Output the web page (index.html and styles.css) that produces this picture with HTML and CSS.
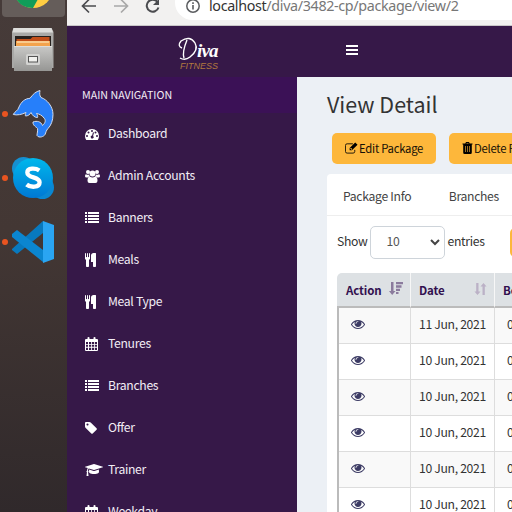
FILE: index.html
```html
<!DOCTYPE html>
<html lang="en">
<head>
<meta charset="utf-8">
<title>View Detail</title>
<link rel="stylesheet" href="styles.css">
</head>
<body>
<svg class="defs" width="0" height="0">
  <symbol id="eye" viewBox="0 0 1792 1792"><path d="M1664 960q-152-236-381-353 61 104 61 225 0 185-131.5 316.5t-316.5 131.5-316.5-131.5-131.5-316.5q0-121 61-225-229 117-381 353 133 205 333.500 326.500t434.500 121.500 434.500-121.500 333.500-326.500zm-720-384q0-20-14-34t-34-14q-125 0-214.500 89.500t-89.500 214.500q0 20 14 34t34 14 34-14 14-34q0-86 61-147t147-61q20 0 34-14t14-34zm848 384q0 34-20 69-140 230-376.500 368.500t-499.500 138.500-499.500-139-376.500-368q-20-35-20-69t20-69q140-229 376.500-368t499.500-139 499.500 139 376.500 368q20 35 20 69z"/></symbol>
  <symbol id="cutlery" viewBox="192 0 1792 1792"><path d="M832 64v640q0 61-35.500 111t-92.500 70v779q0 52-38 90t-90 38h-128q-52 0-90-38t-38-90v-779q-57-20-92.500-70t-35.500-111v-640q0-26 19-45t45-19 45 19 19 45v416q0 26 19 45t45 19 45-19 19-45v-416q0-26 19-45t45-19 45 19 19 45v416q0 26 19 45t45 19 45-19 19-45v-416q0-26 19-45t45-19 45 19 19 45zm768 0v1600q0 52-38 90t-90 38h-128q-52 0-90-38t-38-90v-512h-224q-13 0-22.500-9.500t-9.500-22.500v-800q0-132 94-226t226-94h256q26 0 45 19t19 45z"/></symbol>
  <symbol id="tag" viewBox="128 0 1792 1792"><path d="M576 448q0-53-37.500-90.500t-90.500-37.500-90.500 37.500-37.500 90.500 37.500 90.500 90.500 37.500 90.500-37.500 37.500-90.500zm1067 576q0 53-37 90l-491 492q-39 37-91 37-53 0-90-37l-715-716q-38-37-64.500-101t-26.500-117v-416q0-52 38-90t90-38h416q53 0 117 26.500t102 64.500l715 714q37 39 37 91z"/></symbol>
  <symbol id="cap" viewBox="0 0 2304 1792"><path d="M1774 836l18 316q4 69-82 128t-235 93.500-323 34.500-323-34.500-235-93.500-82-128l18-316 574 181q22 7 48 7t48-7zm530-324q0 23-22 31l-1120 352q-4 1-10 1t-10-1l-652-206q-43 34-71 111.500t-34 178.500q63 36 63 109 0 69-58 107l58 433q2 14-8 25-9 11-24 11h-192q-15 0-24-11-10-11-8-25l58-433q-58-38-58-107 0-73 65-111 11-207 98-330l-333-104q-22-8-22-31t22-31l1120-352q4-1 10-1t10 1l1120 352q22 8 22 31z"/></symbol>
  <symbol id="list" viewBox="0 0 14 14"><path d="M0 1h2v2H0zM3 1h11v2H3zM0 4h2v2H0zM3 4h11v2H3zM0 7h2v2H0zM3 7h11v2H3zM0 10h2v2H0zM3 10h11v2H3z"/></symbol>
  <symbol id="calendar" viewBox="0 0 14 14"><path fill-rule="evenodd" d="M1 2h1.500V.8Q2.500 0 3.500 0t1 .8V2h4V.8Q8.500 0 9.500 0t1 .8V2H12q1 0 1 1v10q0 1-1 1H1q-1 0-1-1V3q0-1 1-1zM1 5v2h2V5zM4 5v2h2.200V5zM7 5v2h2.200V5zM10 5v2h2V5zM1 7.800v2h2v-2zM4 7.800v2h2.200v-2zM7 7.800v2h2.200v-2zM10 7.800v2h2v-2zM1 10.700V13h2v-2.300zM4 10.700V13h2.200v-2.300zM7 10.700V13h2.200v-2.300zM10 10.700V13h2v-2.300z"/></symbol>
  <symbol id="gauge" viewBox="0 0 14 14"><path fill-rule="evenodd" d="M7 2a7 7 0 0 1 7 7q0 2-1.100 3.800-.2.200-.5.200H1.600q-.3 0-.5-.2Q0 11 0 9a7 7 0 0 1 7-7zM2 8a1 1 0 1 0 0 2 1 1 0 0 0 0-2zM3.500 4.500a1 1 0 1 0 0 2 1 1 0 0 0 0-2zM7 3a1 1 0 1 0 0 2 1 1 0 0 0 0-2zM10.500 4.500a1 1 0 1 0 0 2 1 1 0 0 0 0-2zM12 8a1 1 0 1 0 0 2 1 1 0 0 0 0-2zM7.900 5.600 7.100 8.600a1.500 1.500 0 1 0 1 .3l.8-3q0-.5-.4-.6t-.6.300z"/></symbol>
  <symbol id="users" viewBox="0 0 15 14"><circle cx="3" cy="3" r="2"/><circle cx="12" cy="3" r="2"/><circle cx="7.500" cy="4.500" r="3"/><path d="M1 5.300q2 1 3 .2.100 1.200 1 2.100-1.500 0-2.200 1H1.500Q0 8.600 0 7.300q0-2 1-2zM14 5.300q-2 1-3 .2-.1 1.200-1 2.100 1.500 0 2.200 1h1.300q1.500 0 1.500-1.300 0-2-1-2zM4.800 7.600q2.700 2 5.400 0 2.300.3 2.300 4.200 0 2.200-2 2.200h-6q-2 0-2-2.200 0-3.900 2.300-4.200z"/></symbol>
  <symbol id="edit" viewBox="0 0 14 14"><path d="M8.500 2.500H2.300Q.5 2.500.5 4.200v6.600q0 1.700 1.800 1.700h6.400q1.800 0 1.800-1.700V9" fill="none" stroke="currentColor"/><path fill-rule="evenodd" d="m11 1 2.500 2.500-6 6H5V7zM5.800 7.300v.7h.8v.8h.6l.6-.7-1.400-1.400z"/></symbol>
  <symbol id="trash" viewBox="0 0 11 14"><path fill-rule="evenodd" d="M3.300 2.500 4 1h3l.7 1.500H10.500v1H9.800v8q0 1.500-1.300 1.500h-6Q1.200 13 1.200 11.500v-8H.5v-1zM4.400 2.500h2.200L6.400 2H4.600zM3 5v6h.6V5zM5.200 5v6h.6V5zM7.400 5v6H8V5z"/></symbol>
</svg>
<div class="screen">
  <aside class="dock">
    <div class="app chrome"><svg width="48" height="48" viewBox="0 0 48 48"><circle cx="24" cy="24" r="20" fill="#ffcd42"/><path d="M6.500 14A20 20 0 0 0 24 44l9-16-9-4z" fill="#109d59"/><path d="M6.500 14a20 20 0 0 1 35 0H24z" fill="#dd4b3e"/><circle cx="24" cy="24" r="9" fill="#fff"/><circle cx="24" cy="24" r="7" fill="#4285f4"/></svg></div>
    <div class="app"><svg width="48" height="48" viewBox="0 0 48 48">
      <defs><linearGradient id="metal" x2="0" y2="1"><stop stop-color="#c9c9c7"/><stop offset="1" stop-color="#969694"/></linearGradient></defs>
      <path d="M4.500 2h38l2 4v36H3V6z" fill="#a9a9a7"/><path d="M4.500 2h38l1.500 4.500H3.500z" fill="#dededc"/><path d="M6 10h36v13H6z" fill="#26211e"/><path d="M7.500 13h14l2-2h17v11h-33z" fill="#c34f19"/><path d="M7 15h34v5H7z" fill="#f3a34d"/><path d="M8 16h32" stroke="#fff3cf"/><path d="M5 20h38v25H5z" fill="url(#metal)"/><path d="M5 20.500h38" stroke="#deddda"/><rect x="17" y="28" width="14" height="11" rx="1.500" fill="#d3d3d1"/><rect x="19.500" y="30.500" width="9" height="5.500" fill="#f1f1ee" stroke="#555"/>
    </svg></div>
    <div class="app running"><svg width="48" height="48" viewBox="0 0 48 48"><path d="M4.300 24.500C5 22 9 21 10 17c2-5 6-8.500 11-8.700C24 4 27 1.500 31 .5c-.5 3-.5 5 1 7 6 2 12 9 12 17 0 6-2 11-5 14-2 2-2 4-3 6-1 2-6 4-8 1 0-2 1-5 .5-7-1-1.500-5-3-4.500-6.500 4-1.500 8-.5 9.500 3.500C36.500 33 37 30 35 28c-2-3-5-4-7.500-4.500 1 1.500 1.500 3 1 4-3 0-5-2-6.500-5-1 2-3 3.500-5.500 3.500-.5-1 0-2 .5-3.500C13 24.500 8 25.500 4.300 24.500z" fill="#267ffa" stroke="#d3dbed" stroke-width="1"/></svg></div>
    <div class="app running"><svg width="48" height="48" viewBox="0 0 48 48">
      <defs><linearGradient id="sky" x2="0" y2="1"><stop stop-color="#00b8ec"/><stop offset="1" stop-color="#0078d4"/></linearGradient></defs>
      <circle cx="14.500" cy="14.500" r="11.500" fill="#168fd0"/><circle cx="33.500" cy="33.500" r="11.500" fill="#0a87d2"/><circle cx="24" cy="24" r="20" fill="url(#sky)"/><path d="M30.300 16.500c-3.500-2.500-12-3-12 2 0 6 12.300 3.800 12.300 9.800 0 5.800-9.500 5.200-13 2.200" fill="none" stroke="#fff" stroke-width="4.300"/></svg></div>
    <div class="app running"><svg width="48" height="48" viewBox="0 0 48 48"><path d="M3 31 34 3v12L8 36l-5-4z" fill="#0879be"/><path d="m3 16 5-4 26 20v12L3 19z" fill="#0b86d0"/><path d="m34 3 11 4v34l-11 4z" fill="#2aa5f2"/></svg></div>
  </aside>
  <div class="browser">
    <div class="toolbar">
      <div class="controls"><svg width="96" height="20" viewBox="0 0 96 20" fill="none" stroke-width="1.700"><path d="M29 6H16m6-6.500L15.500 6l6.500 6.500" stroke="#4b4c4f"/><path d="M47 6h13m-6-6.500L60.500 6 54 12.500" stroke="#a8a8a8"/><path d="M91.500 7.500A6 6 0 1 1 90.500 2" stroke="#4b4c4f" stroke-width="2"/><path d="M92-1v6h-6z" fill="#4b4c4f"/></svg></div>
      <div class="address"><svg width="16" height="16" viewBox="0 0 16 16"><circle cx="8" cy="8" r="6.200" fill="none" stroke="#5b5d60" stroke-width="1.500"/><path d="M8 7v4.500M8 4.300V6" stroke="#5b5d60" stroke-width="1.600"/></svg><span class="url"><b>localhost</b>/diva/3482-cp/package/view/2</span></div>
    </div>
    <header class="top">
      <div class="logo"><svg class="swash" width="24" height="26" viewBox="0 0 24 26"><path d="M9 4Q4 16 6 22M2 22q5 3 10-1 9-7 5-14Q12-1 3 5q-4 5 1 7" fill="none" stroke="#fff" stroke-width="1.400"/></svg><span class="name">iva</span><span class="sub">FITNESS</span></div>
      <div class="burger"><i></i><i></i><i></i></div>
    </header>
    <div class="body">
      <nav class="side">
        <div class="nav-title">MAIN NAVIGATION</div>
        <a><svg><use href="#gauge"/></svg>Dashboard</a>
        <a><svg class="w15"><use href="#users"/></svg>Admin Accounts</a>
        <a><svg><use href="#list"/></svg>Banners</a>
        <a><svg><use href="#cutlery"/></svg>Meals</a>
        <a><svg><use href="#cutlery"/></svg>Meal Type</a>
        <a><svg><use href="#calendar"/></svg>Tenures</a>
        <a><svg><use href="#list"/></svg>Branches</a>
        <a><svg><use href="#tag"/></svg>Offer</a>
        <a><svg class="w18"><use href="#cap"/></svg>Trainer</a>
        <a><svg><use href="#calendar"/></svg>Weekday</a>
      </nav>
      <main>
        <h1>View Detail</h1>
        <div class="actions">
          <button class="edit"><svg width="13" height="14"><use href="#edit"/></svg><span>Edit Package</span></button>
          <button class="delete"><svg width="11" height="14"><use href="#trash"/></svg><span>Delete Package</span></button>
        </div>
        <section class="card">
          <div class="tabs"><span>Package Info</span><span>Branches</span></div>
          <div class="filter"><span>Show</span><div class="select">10<svg width="10" height="7" viewBox="0 0 10 7"><path d="m1 1 4 4 4-4" fill="none" stroke="#444" stroke-width="2"/></svg></div><span>entries</span><div class="export"></div></div>
          <div class="table">
            <div class="row head"><div>Action<svg width="14" height="14" viewBox="0 0 14 14"><path d="M2 0h2.500v9H6.500l-3.300 4L0 9h2zM7 0h7v2.300H7zM7 3.300h5.500v2.400H7zM7 6.700h4V9H7zM7 10h2.500v2H7z"/></svg></div><div>Date<svg class="light" width="13" height="14" viewBox="0 0 12 14"><path d="M1.700 1h2.300v8.500h2L3 13 0 9.500h1.700zM8 13h2.300V4.500H12L9 1 6 4.500h2z"/></svg></div><div>Booking</div></div>
            <div class="row"><div><svg><use href="#eye"/></svg></div><div>11 Jun, 2021</div><div>01</div></div>
            <div class="row"><div><svg><use href="#eye"/></svg></div><div>10 Jun, 2021</div><div>01</div></div>
            <div class="row"><div><svg><use href="#eye"/></svg></div><div>10 Jun, 2021</div><div>01</div></div>
            <div class="row"><div><svg><use href="#eye"/></svg></div><div>10 Jun, 2021</div><div>01</div></div>
            <div class="row"><div><svg><use href="#eye"/></svg></div><div>10 Jun, 2021</div><div>01</div></div>
            <div class="row"><div><svg><use href="#eye"/></svg></div><div>10 Jun, 2021</div><div>01</div></div>
          </div>
        </section>
      </main>
    </div>
  </div>
</div>
</body>
</html>
```
FILE: styles.css
```css
* { box-sizing: border-box; }
body { margin: 0; width: 512px; height: 512px; overflow: hidden; font: 12.2px/20px "Noto Sans CJK SC", "Open Sans", sans-serif; letter-spacing: -.32px; color: #333; }
.defs { position: absolute; }
.screen { display: flex; width: 512px; height: 512px; overflow: hidden; }
.dock { width: 67px; flex: none; height: 512px; background: linear-gradient(#463b39, #433734 45%, #30292b); overflow: hidden; }
.app { height: 64px; display: flex; align-items: center; padding-left: 9px; position: relative; }
.app svg { flex: none; }
.chrome { height: 61px; margin: -44px 2px 1px; padding-left: 7px; background: #655d5a; border-radius: 4px; }
.chrome svg { margin-top: 3px; }
.running::before { content: ""; position: absolute; left: 2px; top: 29px; width: 6px; height: 6px; border-radius: 50%; background: #e95420; }
.browser { width: 445px; flex: none; overflow: hidden; }
.toolbar { height: 26px; background: #f2f1f0; border-bottom: 1px solid #c9c7c8; display: flex; overflow: hidden; }
.controls { width: 108px; flex: none; }
.controls svg { overflow: visible; display: block; }
.address { height: 35px; width: 420px; margin-top: -15px; flex: none; background: #fff; border-radius: 18px; display: flex; align-items: center; padding: 6px 0 0 10px; gap: 8px; }
.url { font: 14.3px/20px "Noto Sans", sans-serif; letter-spacing: -.34px; color: #777; white-space: nowrap; }
.url b { font-weight: 400; color: #333; }
.top { height: 51px; background: #361848; display: flex; }
.logo { width: 230px; flex: none; position: relative; }
.swash { position: absolute; left: 111px; top: 10px; }
.name { position: absolute; left: 130px; top: 14px; font: italic bold 19px/22px "Liberation Serif", serif; color: #fff; letter-spacing: -.8px; }
.sub { position: absolute; left: 113px; top: 35px; font: italic 9px/10px "Liberation Sans", sans-serif; letter-spacing: 0; color: #b27a3f; }
.burger { padding: 19px 0 0 49px; display: grid; align-content: start; gap: 2px; }
.burger i { width: 12px; height: 2px; background: #fff; }
.body { display: flex; height: 435px; }
.side { width: 230px; flex: none; background: #361848; color: #f2edf5; overflow: hidden; }
.nav-title { height: 36px; line-height: 36px; padding-left: 15px; background: #3b1156; font-size: 10.700px; letter-spacing: 0; }
.side a { display: flex; align-items: center; height: 42px; padding: 0 0 2px 18px; }
.side a svg { width: 14px; height: 14px; margin: 1px 9px 0 0; fill: #fff; }
.side a .w15 { width: 15px; margin-right: 8px; }
.side a .w18 { width: 18px; margin-right: 5px; }
main { width: 215px; flex: none; background: #ecf0f5; padding: 14px 0 0 30px; overflow: hidden; }
h1 { margin: 0; font-size: 21.5px; line-height: 26px; letter-spacing: 0; font-weight: 400; height: 42px; white-space: nowrap; }
.actions { display: flex; gap: 13px; padding-left: 5px; }
button { height: 31px; border: 0; border-radius: 5px; background: #fdb73b; color: #161006; font: 11.300px/20px "Noto Sans CJK SC", sans-serif; letter-spacing: -.25px; white-space: nowrap; flex: none; display: flex; align-items: center; padding: 0 0 0 13px; gap: 1px; }
button span { margin-top: -1px; }
button svg { margin-top: -1px; }
.edit { width: 104px; }
.delete { width: 120px; }
.card { width: 300px; margin-top: 10px; background: #fff; border-radius: 4px 0 0; height: 340px; }
.tabs { height: 42px; border-bottom: 1px solid #eee; display: flex; align-items: center; padding: 2px 0 0 16px; gap: 37.5px; color: #444; }
.filter { height: 57px; display: flex; align-items: center; padding: 0 0 4px 10px; }
.filter > span { margin-top: -3px; }
.select { width: 75px; height: 33px; border: 1px solid #ced4da; border-radius: 5px; margin: 0 3px 0 2px; display: flex; align-items: center; justify-content: space-between; padding: 0 4px 3px 16px; color: #555; }
.select svg { margin-top: 3px; }
.export { width: 60px; height: 29px; margin-left: 25px; border-radius: 5px; background: #fdb73b; }
.table { margin-left: 10px; width: 260px; }
.row { display: grid; grid-template-columns: 72px 84px 102px; height: 36px; border-left: 2px solid #bbb; }
.row > div { border-right: 1px solid #ddd; border-bottom: 1px solid #ddd; display: flex; align-items: center; padding: 0 0 3px 8px; white-space: nowrap; }
.row > div:first-child { padding: 0 0 2px 12px; }
.row svg { width: 14px; height: 14px; margin-top: -2px; fill: #3c3b64; }
.row:nth-child(even) { background: #f9f9f9; }
.row > div:last-child { padding-left: 12px; }
.row.head { height: 35px; grid-template-columns: 74px 84px 102px; background: #dde1e4; color: #32104f; font-size: 11.500px; letter-spacing: -.1px; font-weight: 700; border-left: 0; border-radius: 5px 0 0; }
.row.head > div { border-right-color: #f7f7f7; border-bottom: 2px solid #bbb; justify-content: space-between; padding: 1px 7px 0 8px; }
.row.head > div:first-child { padding: 1px 7px 0 9px; }
.row.head svg { fill: #8b7b9d; margin-top: -3px; }
.row.head svg.light { width: 13px; fill: #bbb1c6; }
```
